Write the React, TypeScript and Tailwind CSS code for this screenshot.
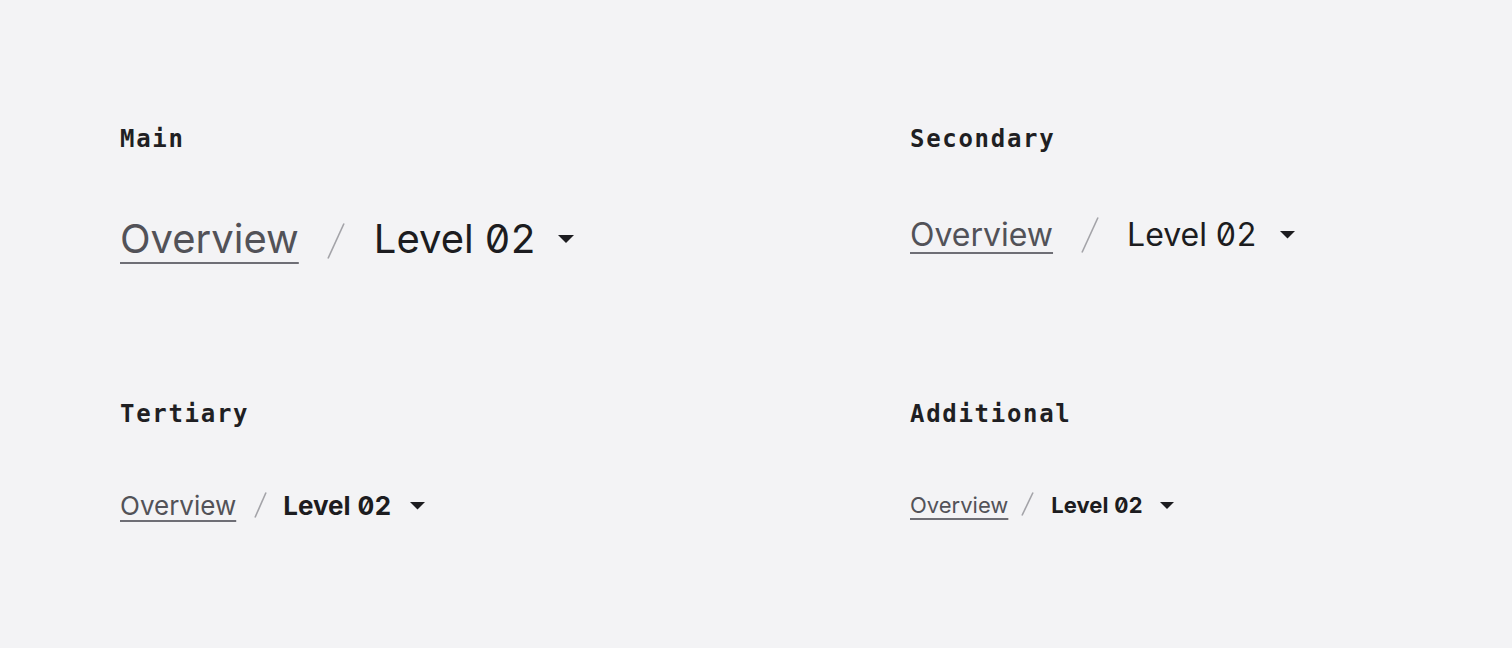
import React from 'react'

type Size = 'main' | 'secondary' | 'tertiary' | 'additional'

type Spec = {
  text: string
  weight: string
  slashBox: string
  slash: [number, number]
  gap: string
  caretGap: string
  caret: number
  under: string
}

const styles: Record<Size, Spec> = {
  main: {
    text: 'text-[40px] leading-[48px]',
    weight: 'font-normal',
    slashBox: 'ml-[28px] mr-[29px] translate-y-[2px]',
    slash: [18, 36],
    gap: 'mt-[60px]',
    caretGap: 'ml-[22px]',
    caret: 16,
    under: 'underline-offset-[9px] decoration-2',
  },
  secondary: {
    text: 'text-[32px] leading-[40px]',
    weight: 'font-normal',
    slashBox: 'ml-[28px] mr-[28px]',
    slash: [18, 36],
    gap: 'mt-[60px]',
    caretGap: 'ml-[23px]',
    caret: 15,
    under: 'underline-offset-[6px] decoration-2',
  },
  tertiary: {
    text: 'text-[26px] leading-[32px]',
    weight: 'font-bold',
    slashBox: 'ml-[18px] mr-[16px] -translate-y-[1px]',
    slash: [13, 26],
    gap: 'mt-[60px]',
    caretGap: 'ml-[19px]',
    caret: 15,
    under: 'underline-offset-[5px] decoration-[1.5px]',
  },
  additional: {
    text: 'text-[22px] leading-[28px]',
    weight: 'font-bold',
    slashBox: 'ml-[13px] mr-[17px] -translate-y-[1px]',
    slash: [13, 24],
    gap: 'mt-[61px]',
    caretGap: 'ml-[17px]',
    caret: 14,
    under: 'underline-offset-[5px] decoration-[1.5px]',
  },
}

function Caret({ size }: { size: number }) {
  return (
    <svg width={size} height={size / 2} viewBox="0 0 16 8" className="shrink-0">
      <path d="M0 0 L16 0 L8 8 Z" fill="#1c1c20" />
    </svg>
  )
}

function Slash({ w, h }: { w: number; h: number }) {
  return (
    <svg width={w} height={h} viewBox={`0 0 ${w} ${h}`} className="shrink-0">
      <line x1={w - 1} y1={0.5} x2={1} y2={h - 0.5} stroke="#a3a3a8" strokeWidth={1.6} />
    </svg>
  )
}

function Breadcrumb({ size }: { size: Size }) {
  const s = styles[size]
  return (
    <div className={`flex items-center ${s.gap} ${s.text}`} style={{ fontFamily: 'Inter, sans-serif', fontFeatureSettings: "'zero' 1, 'tnum' 1" }}>
      <a className={`text-[#525258] underline decoration-[#6e6e75] ${s.under}`}>Overview</a>
      <span className={s.slashBox}>
        <Slash w={s.slash[0]} h={s.slash[1]} />
      </span>
      <span className={`text-[#1c1c20] ${s.weight}`}>Level 02</span>
      <span className={s.caretGap}>
        <Caret size={s.caret} />
      </span>
    </div>
  )
}

function Block({ title, size }: { title: string; size: Size }) {
  return (
    <div className="flex flex-col">
      <h2 className="text-[24px] leading-[32px] font-bold text-[#1f1f23] tracking-[1.7px]" style={{ fontFamily: '"DejaVu Sans Mono", monospace' }}>
        {title}
      </h2>
      <Breadcrumb size={size} />
    </div>
  )
}

export default function App() {
  return (
    <div className="min-h-[648px] bg-[#f3f3f5] pl-[120px] pt-[123px]">
      <div className="grid grid-cols-[790px_1fr] grid-rows-[275px_auto]">
        <Block title="Main" size="main" />
        <Block title="Secondary" size="secondary" />
        <Block title="Tertiary" size="tertiary" />
        <Block title="Additional" size="additional" />
      </div>
    </div>
  )
}
